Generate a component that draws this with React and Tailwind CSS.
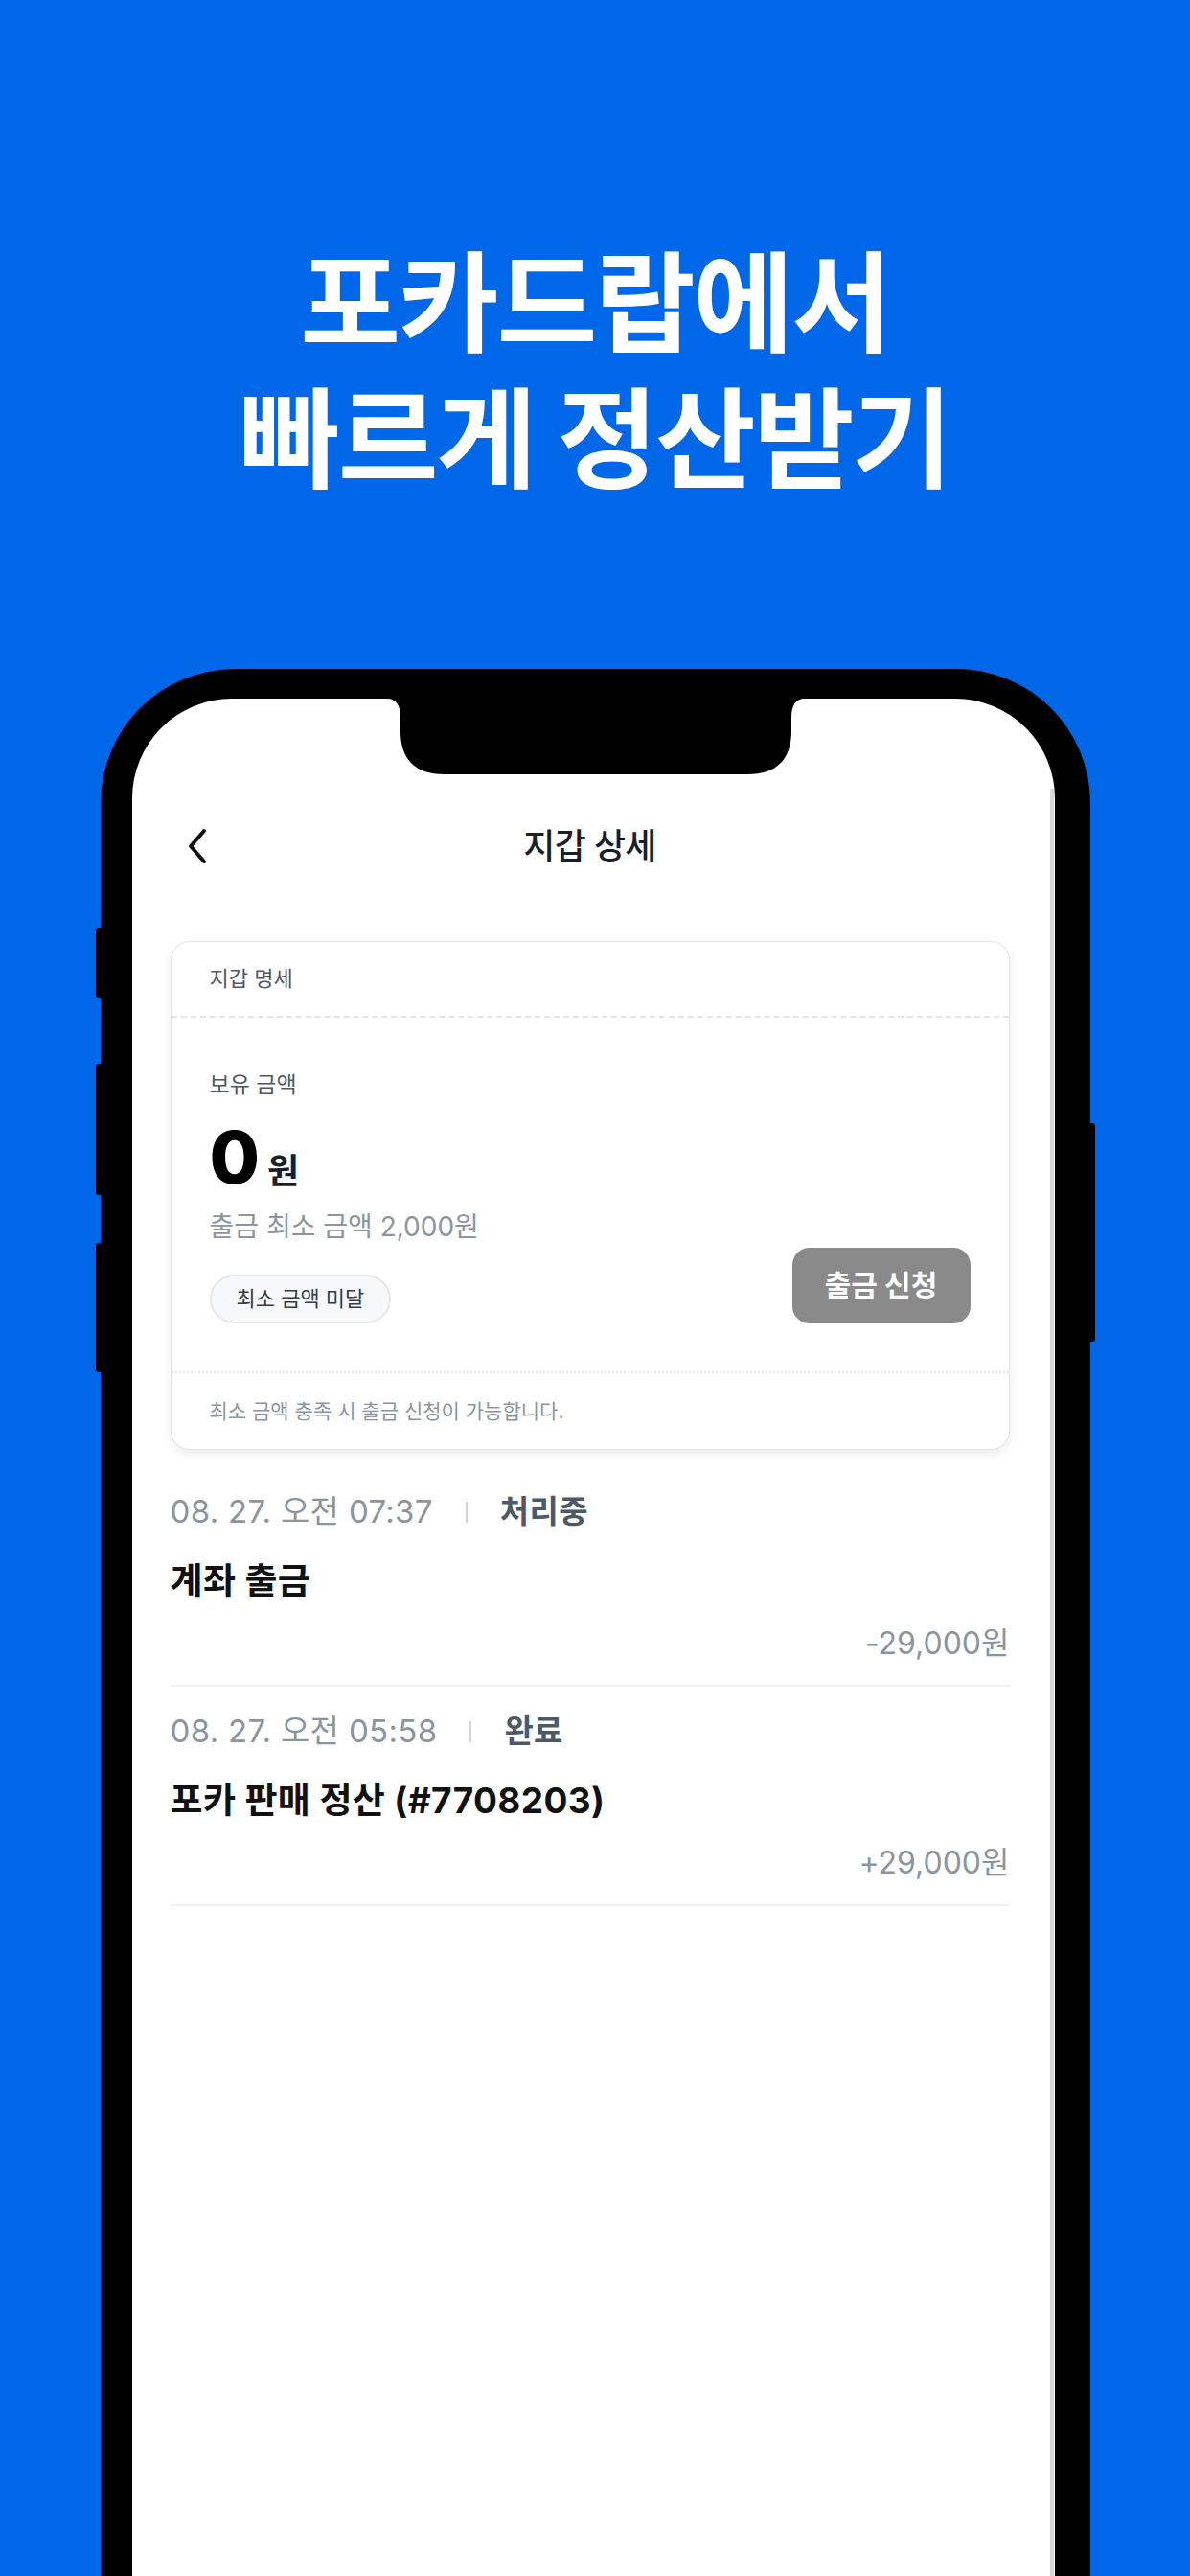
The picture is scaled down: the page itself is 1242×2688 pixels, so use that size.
const rows = [
  { date: '08. 27. 오전 07:37', status: '처리중', title: '계좌 출금', amount: '-29,000원' },
  { date: '08. 27. 오전 05:58', status: '완료', title: '포카 판매 정산 (#7708203)', amount: '+29,000원' },
];

const Notch = () => (
  <svg className="absolute top-0 left-[266px]" width="436" height="80" viewBox="0 0 436 80">
    <path
      d="M0 0 C10 0 14 8 14 20 L14 34 C14 62 28 79 60 79 L376 79 C408 79 422 62 422 34 L422 20 C422 8 426 0 436 0 Z"
      fill="#000"
    />
  </svg>
);

const App = () => {
  return (
    <div className="w-[1242px] h-[2688px] overflow-hidden bg-[#0068E8] flex flex-col items-center font-[Inter,'Noto_Sans_CJK_KR',sans-serif]">
      <h1 className="mt-[238px] text-white font-bold text-[114px] leading-[142px] text-center tracking-[-0.02em] font-['Noto_Sans_CJK_KR',sans-serif]">
        <div>포카드랍에서</div>
        <div>빠르게 정산받기</div>
      </h1>

      {/* phone */}
      <div className="relative mt-[176px] w-[1033px] h-[1990px] shrink-0 bg-black rounded-t-[140px] pt-[31px] pl-[33px] pr-[37px]">
        <div className="absolute left-[-5px] top-[270px] w-[6px] h-[73px] bg-black rounded-l-[3px]" />
        <div className="absolute left-[-5px] top-[412px] w-[6px] h-[137px] bg-black rounded-l-[3px]" />
        <div className="absolute left-[-5px] top-[599px] w-[6px] h-[135px] bg-black rounded-l-[3px]" />
        <div className="absolute right-[-5px] top-[474px] w-[6px] h-[228px] bg-black rounded-r-[3px]" />

        <div className="relative h-full flex flex-col bg-white rounded-t-[104px]">
          <Notch />
          <div className="absolute right-[1px] top-[94px] bottom-0 w-[4px] bg-[#d6d7dc]" />

          <div className="pt-[104px] pl-[40px] pr-[47px]">
            {/* header */}
            <div className="relative h-[100px] flex items-center justify-center">
              <svg className="absolute left-[16px]" width="24" height="40" viewBox="0 0 24 40">
                <path d="M19 4 L5 20 L19 36" fill="none" stroke="#111" strokeWidth="4" strokeLinecap="round" strokeLinejoin="round" />
              </svg>
              <span className="text-[36px] font-medium text-[#191f28] tracking-[-0.02em]">지갑 상세</span>
            </div>

            {/* wallet card */}
            <div className="mt-[49px] rounded-[20px] border border-[#e3e5e8] bg-white shadow-[0_4px_10px_rgba(0,0,0,0.08)]">
              <div className="h-[79px] px-[40px] flex items-center border-b-2 border-dashed border-[#e2e4e8]">
                <span className="text-[22px] text-[#4e5968]">지갑 명세</span>
              </div>

              <div className="px-[40px] pt-[54px] pb-[50px] border-b-2 border-dotted border-[#e2e4e8]">
                <div className="text-[23px] leading-[32px] text-[#4e5968]">보유 금액</div>
                <div className="mt-[20px] h-[78px] flex items-baseline gap-[8px]">
                  <span className="text-[76px] leading-[78px] font-extrabold text-black">0</span>
                  <span className="text-[36px] leading-none font-semibold text-[#191f28]">원</span>
                </div>
                <div className="mt-[16px] text-[28px] leading-[36px] text-[#8b95a1]">출금 최소 금액 2,000원</div>
                <div className="mt-[4px] flex items-end justify-between">
                  <span className="h-[51px] px-[26px] flex items-center rounded-full border-2 border-[#e5e7eb] bg-[#f7f8fa] text-[22px] text-[#333d4b]">
                    최소 금액 미달
                  </span>
                  <button className="w-[186px] h-[79px] rounded-[18px] bg-[#8a8a8a] text-white text-[30px] font-bold">
                    출금 신청
                  </button>
                </div>
              </div>

              <div className="h-[79px] px-[40px] flex items-center">
                <span className="text-[21px] text-[#8b95a1]">최소 금액 충족 시 출금 신청이 가능합니다.</span>
              </div>
            </div>

            {/* history */}
            <div className="mt-[18px]">
              {rows.map((r) => (
                <div key={r.date} className="pt-[27px] pb-[23px] border-b-2 border-[#f0f1f4]">
                  <div className="h-[40px] flex items-center text-[33px] tracking-[0.01em]">
                    <span className="text-[#8b95a1]">{r.date}</span>
                    <span className="mx-[34px] w-[2px] h-[22px] bg-[#d1d5db]" />
                    <span className="font-semibold text-[#4e5968]">{r.status}</span>
                  </div>
                  <div className="mt-[30px] h-[44px] flex items-center text-[37px] font-bold text-[#111] tracking-[0.01em]">{r.title}</div>
                  <div className="mt-[23px] h-[40px] flex items-center justify-end text-[32px] text-[#8b95a1]">{r.amount}</div>
                </div>
              ))}
            </div>
          </div>
        </div>
      </div>
    </div>
  );
};

export default App;
